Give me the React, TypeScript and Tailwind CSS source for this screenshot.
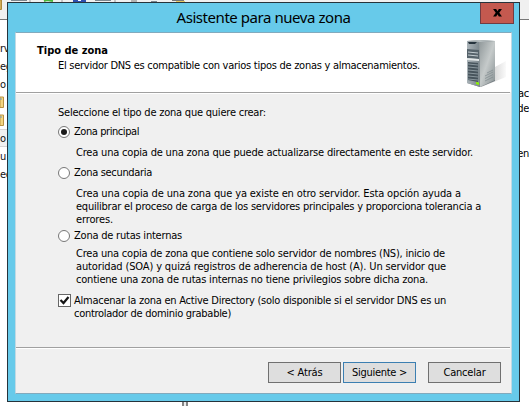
import { useLayoutEffect, useRef } from 'react';

type FitProps = { text: string; width: number; className?: string };

// A single line of text, tracked so that it spans the given width.
function Fit({ text, width, className = '' }: FitProps) {
  const ref = useRef<HTMLSpanElement>(null);
  useLayoutEffect(() => {
    const el = ref.current;
    if (!el) return;
    el.style.letterSpacing = '0px';
    const natural = el.getBoundingClientRect().width;
    el.style.letterSpacing = `${(width - natural) / text.length}px`;
  }, [text, width]);
  return (
    <div className={`h-[13px] leading-[13px] whitespace-nowrap ${className}`}>
      <span ref={ref} className="inline-block">{text}</span>
    </div>
  );
}

function Radio({ label, width, checked = false }: { label: string; width: number; checked?: boolean }) {
  return (
    <label className="flex h-[13px] items-center gap-1">
      <span className="flex size-3 shrink-0 items-center justify-center rounded-full border border-[#777] bg-white">
        {checked && <span className="size-1.5 rounded-full bg-[#1c1c1c]" />}
      </span>
      <Fit text={label} width={width} />
    </label>
  );
}

function Button({ label, width, primary = false }: { label: string; width: number; primary?: boolean }) {
  return (
    <button
      className={`flex h-[21px] w-[73px] items-center justify-center border bg-[#dedede] ${primary ? 'border-[#3c7fb1]' : 'border-[#707070]'}`}
    >
      <Fit text={label} width={width} />
    </button>
  );
}

function ServerIcon() {
  return (
    <svg className="mt-px" width="41" height="50" viewBox="0 0 41 50">
      <defs>
        <linearGradient id="side" x1="0" y1="0" x2="1" y2="1">
          <stop offset="0" stopColor="#8f9799" />
          <stop offset="0.5" stopColor="#c5caca" />
          <stop offset="1" stopColor="#858e90" />
        </linearGradient>
        <linearGradient id="front" x1="0" y1="0" x2="1" y2="0">
          <stop offset="0" stopColor="#aab3b8" />
          <stop offset="1" stopColor="#7b868c" />
        </linearGradient>
        <linearGradient id="shadow" x1="0" y1="0" x2="1" y2="0">
          <stop offset="0" stopColor="#b4b4b4" />
          <stop offset="1" stopColor="#fafafa" />
        </linearGradient>
      </defs>
      <path d="M29 28 40 22V38L15 48Z" fill="url(#shadow)" />
      <path d="M1 2 14 1 29 2V42L14 48 1 44Z" fill="#717b80" />
      <path d="M13 3 29 2V41L14 48Z" fill="url(#side)" />
      <path d="M1 2 13 3 14 48 1 44Z" fill="url(#front)" />
      <path d="M1 2 13 1 29 2 14 3Z" fill="#b9c0c2" />
      <path d="M2 3H11L9 5H3Z" fill="#26333d" />
      <path d="M1 10 13 11V20L1 19Z" fill="#56636b" />
      <path d="M2 13 12 14M2 16 12 17" stroke="#c3ccd1" />
      <path d="M1 19 13 20V22L1 21Z" fill="#e2e7e8" />
      <path d="M2 23 12 24V43L2 41Z" fill="#47545c" />
      <path d="M2 25 12 26M2 28 12 29M2 31 12 32M2 34 12 35M2 37 12 38M2 40 12 41" stroke="#9ba7ad" strokeWidth=".8" />
      <path d="M19 37 27 33M19 39.5 27 35.5M19 42 27 38M21 34 27 31" stroke="#7d888c" strokeWidth=".7" />
      <path d="M10 43 13 43.5V46L10 45Z" fill="#8af400" />
    </svg>
  );
}

function TreeFolder() {
  return (
    <svg className="block" width="4" height="12" viewBox="0 0 4 12">
      <path d="M0 1H3.5V11.5H0Z" fill="#f4d681" stroke="#b99345" />
      <path d="M0 3H2" stroke="#6d9bc3" />
    </svg>
  );
}

function TreeText({ text }: { text: string }) {
  return (
    <div className="h-[18px] leading-[20px] tracking-tight text-[#111]">{text}</div>
  );
}

function Desktop() {
  return (
    <div className="flex h-[406px] flex-col">
      <div className="flex h-[19px] items-start bg-[#f0f0f0]">
        <svg width="529" height="19" viewBox="0 0 529 19">
          <path d="M0 0H1.5V9.5H0Z" fill="#f1cf72" stroke="#b08a3c" />
          <path d="M11 .5H27M95 .5H111M151 1.5H157" stroke="#7c8790" />
          <path d="M30 0V2M62 0V2M115 0V2" stroke="#9a9a9a" />
          <path d="M44 1 47 0 53 1" stroke="#48b43c" strokeWidth="2" fill="none" />
          <path d="M73 1H86" stroke="#304fae" strokeWidth="2" />
          <path d="M78 .5H81" stroke="#fff" />
          <path d="M131 1H137M172 .5H184" stroke="#777" />
          <path d="M176 1.5H185" stroke="#e7c865" />
        </svg>
      </div>
      <div className="h-px bg-[#777]" />
      <div className="flex flex-1 justify-between bg-white">
        <div className="w-[7px] pt-[19px]">
          <TreeText text="rv" />
          <TreeText text="eg" />
          <TreeText text="o" />
          <div className="flex h-[18px] items-center"><TreeFolder /></div>
          <div className="flex h-[18px] items-center"><TreeFolder /></div>
          <div className="border-y border-[#d5d5d5] bg-[#f1f1f1]"><div className="-my-px"><TreeText text="o" /></div></div>
          <TreeText text="u" />
          <TreeText text="ec" />
        </div>
        <div className="mr-auto ml-[175px] w-[6px] border-x-2 border-[#858585] bg-[#eee]" />
        <div className="flex w-[12px] flex-col items-end pt-[67px] tracking-tight">
          <div className="h-[15px] leading-[13px]">ac</div>
          <div className="h-[45px] leading-[13px]">de</div>
          <div className="leading-[13px]">en</div>
        </div>
      </div>
    </div>
  );
}

export default function App() {
  return (
    <div className="relative h-[406px] w-[529px] overflow-hidden bg-white font-['DejaVu_Sans_Condensed','DejaVu_Sans',sans-serif] text-[11px] text-black">
      <Desktop />
      <section className="absolute top-[2px] left-[7px] flex h-[400px] w-[513px] flex-col border border-[#26333b] bg-[#67caea] px-[7px] pb-[7px]">
        <header className="relative flex h-[29px] shrink-0 justify-center">
          <h1 className="pt-[3px] font-['Noto_Sans','Open_Sans',sans-serif] text-[15px] leading-[22px]">
            <Fit text="Asistente para nueva zona" width={174} className="!h-[22px] !leading-[22px]" />
          </h1>
          <button className="absolute top-0 right-[-2px] flex h-[21px] w-[34px] items-center justify-center border border-t-0 border-[#713c42] bg-[#c4594f]">
            <svg width="9" height="8" viewBox="0 0 10 9">
              <path d="M0 0H3.5L5 2.5 6.5 0H10L7 4.3 10 8.5H6.5L5 6 3.5 8.5H0L3 4.3Z" fill="#000" />
            </svg>
          </button>
        </header>
        <main className="flex flex-1 flex-col border border-[#82aabd] border-r-[#c0d9e4] border-l-[#c0d9e4] bg-[#f0f0f0]">
          <div className="flex h-[59px] shrink-0 justify-between bg-white pt-[5px] pr-[4px] pl-[21px]">
            <div>
              <Fit text="Tipo de zona" width={71} className="mt-[6px] font-bold" />
              <Fit text="El servidor DNS es compatible con varios tipos de zonas y almacenamientos." width={362} className="mt-[2px] ml-[21px]" />
            </div>
            <ServerIcon />
          </div>
          <div className="mr-px h-[2px] shrink-0 border-b border-white bg-[#a0a0a0]" />
          <div className="flex flex-1 flex-col pt-[12px] pl-[42px]">
            <Fit text="Seleccione el tipo de zona que quiere crear:" width={208} />
            <div className="mt-[6px]"><Radio label="Zona principal" width={65} checked /></div>
            <div className="mt-[8px] pl-[18px]">
              <Fit text="Crea una copia de una zona que puede actualizarse directamente en este servidor." width={397} />
            </div>
            <div className="mt-[7px]"><Radio label="Zona secundaria" width={78} /></div>
            <div className="mt-[8px] pl-[18px]">
              <Fit text="Crea una copia de una zona que ya existe en otro servidor. Esta opción ayuda a" width={385} />
              <Fit text="equilibrar el proceso de carga de los servidores principales y proporciona tolerancia a" width={405} />
              <Fit text="errores." width={37} />
            </div>
            <div className="mt-[3px]"><Radio label="Zona de rutas internas" width={108} /></div>
            <div className="mt-[5px] pl-[18px]">
              <Fit text="Crea una copia de zona que contiene solo servidor de nombres (NS), inicio de" width={369} />
              <Fit text="autoridad (SOA) y quizá registros de adherencia de host (A). Un servidor que" width={370} />
              <Fit text="contiene una zona de rutas internas no tiene privilegios sobre dicha zona." width={352} />
            </div>
            <label className="mt-[8px] flex gap-[3px]">
              <span className="flex size-[13px] shrink-0 items-center justify-center border border-[#666] bg-white">
                <svg width="11" height="11" viewBox="0 0 11 11">
                  <path d="M1.5 5 4.5 8 9.5 2" fill="none" stroke="#151515" strokeWidth="2.2" />
                </svg>
              </span>
              <span>
                <Fit text="Almacenar la zona en Active Directory (solo disponible si el servidor DNS es un" width={372} />
                <Fit text="controlador de dominio grabable)" width={157} />
              </span>
            </label>
          </div>
          <div className="mr-px h-[2px] shrink-0 border-b border-white bg-[#a0a0a0]" />
          <footer className="flex h-[44px] shrink-0 justify-end pt-[13px] pr-[10px]">
            <Button label="< Atrás" width={36} />
            <div className="ml-[2px]"><Button label="Siguiente >" width={55} primary /></div>
            <div className="ml-[12px]"><Button label="Cancelar" width={42} /></div>
          </footer>
        </main>
      </section>
    </div>
  );
}
